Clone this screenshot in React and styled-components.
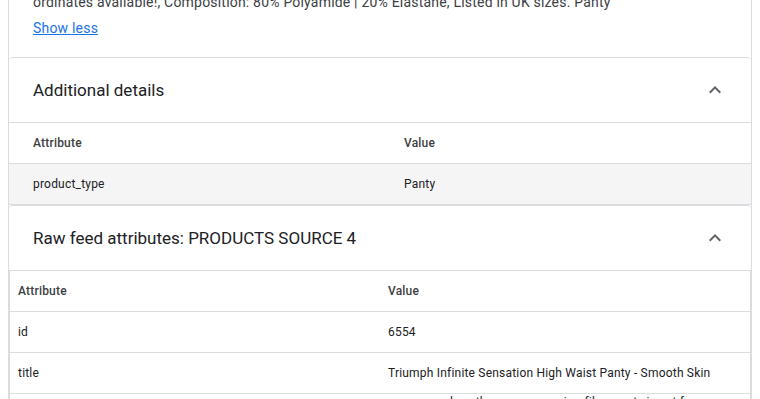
import React from 'react'
import styled, { createGlobalStyle } from 'styled-components'


const GlobalStyle = createGlobalStyle`
    html, body { margin: 0; padding: 0; background: #fff; }
    body {
        font-family: Roboto, 'Noto Sans', Arial, sans-serif;
        color: #3c4043;
        letter-spacing: 0.2px;
        overflow: hidden;
    }
`

const Page = styled.div`
    padding: 0 8px;
`

const Card = styled.div`
    margin-top: -8px;
    border-left: 1px solid #dadce0;
    border-right: 1px solid #dadce0;
    background: #fff;
`

const Description = styled.div`
    padding: 0 24px 19px;
    font-size: 14px;
    line-height: 20px;
    color: #3c4043;
    p { margin: 0; white-space: nowrap; }
`

const ShowLess = styled.a`
    display: inline-block;
    margin-top: 6px;
    color: #1a73e8;
    text-decoration: underline;
    cursor: pointer;
`

const Panel = styled.section`
    border-top: 1px solid #dadce0;
    border-radius: 4px 4px 0 0;
    background: #fff;
`

const PanelHeader = styled.div`
    height: 64px;
    padding: 0 24px;
    display: flex;
    align-items: center;
    justify-content: space-between;
`

const PanelTitle = styled.h3`
    margin: 0;
    font-size: 17px;
    font-weight: 400;
    letter-spacing: 0;
    color: #202124;
`

const Table = styled.div`
    border-top: 1px solid #dadce0;
    ${p => p.$boxed && `
        border-left: 1px solid #dadce0;
        border-right: 1px solid #dadce0;
    `}
`

const Row = styled.div`
    display: grid;
    grid-template-columns: 1fr 1fr;
    min-height: 40px;
    border-bottom: 1px solid #dadce0;
    background: ${p => p.$hover ? '#f5f5f5' : '#fff'};
`

const Cell = styled.div`
    display: flex;
    align-items: ${p => p.$top ? 'flex-start' : 'center'};
    padding: 0 ${p => p.$pad}px;
    font-size: 12px;
    font-weight: ${p => p.$head ? 500 : 400};
    line-height: ${p => p.$top ? '16px' : 'normal'};
    color: ${p => p.$head ? '#3c4043' : '#202124'};
`

const Chevron = () => (
    <svg width='24' height='24' viewBox='0 0 24 24' fill='#5f6368'>
        <path d='M12 8l-6 6 1.41 1.41L12 10.83l4.59 4.58L18 14z' />
    </svg>
)


const DataTable = ({ rows, pad, boxed, hoverRow }) => (
    <Table $boxed={boxed}>
        <Row>
            <Cell $head $pad={pad}>Attribute</Cell>
            <Cell $head $pad={pad}>Value</Cell>
        </Row>
        {rows.map((r, i) => (
            <Row key={r[0]} $hover={i === hoverRow}>
                <Cell $pad={pad}>{r[0]}</Cell>
                <Cell $pad={pad} $top={r[2]}>{r[1]}</Cell>
            </Row>
        ))}
    </Table>
)


const rawRows = [
    ['id', '6554'],
    ['title', 'Triumph Infinite Sensation High Waist Panty - Smooth Skin'],
    ['description', 'more seamless than ever, our microfibre panty is cut for a smooth, invisible fit under clothing. Soft and stretchy, it moulds to the body for all-day comfort with no visible panty lines. Matching co-ordinates available!', true],
]


export default function App() {
    return (
        <Page>
            <GlobalStyle />
            <Card>
                <Description>
                    <p>ordinates available!, Composition: 80% Polyamide | 20% Elastane, Listed in UK sizes. Panty</p>
                    <ShowLess href='#!'>Show less</ShowLess>
                </Description>

                <Panel>
                    <PanelHeader>
                        <PanelTitle>Additional details</PanelTitle>
                        <Chevron />
                    </PanelHeader>
                    <DataTable rows={[['product_type', 'Panty']]} pad={24} hoverRow={0} />
                </Panel>

                <Panel>
                    <PanelHeader>
                        <PanelTitle>Raw feed attributes: PRODUCTS SOURCE 4</PanelTitle>
                        <Chevron />
                    </PanelHeader>
                    <DataTable rows={rawRows} pad={8} boxed />
                </Panel>
            </Card>
        </Page>
    )
}
